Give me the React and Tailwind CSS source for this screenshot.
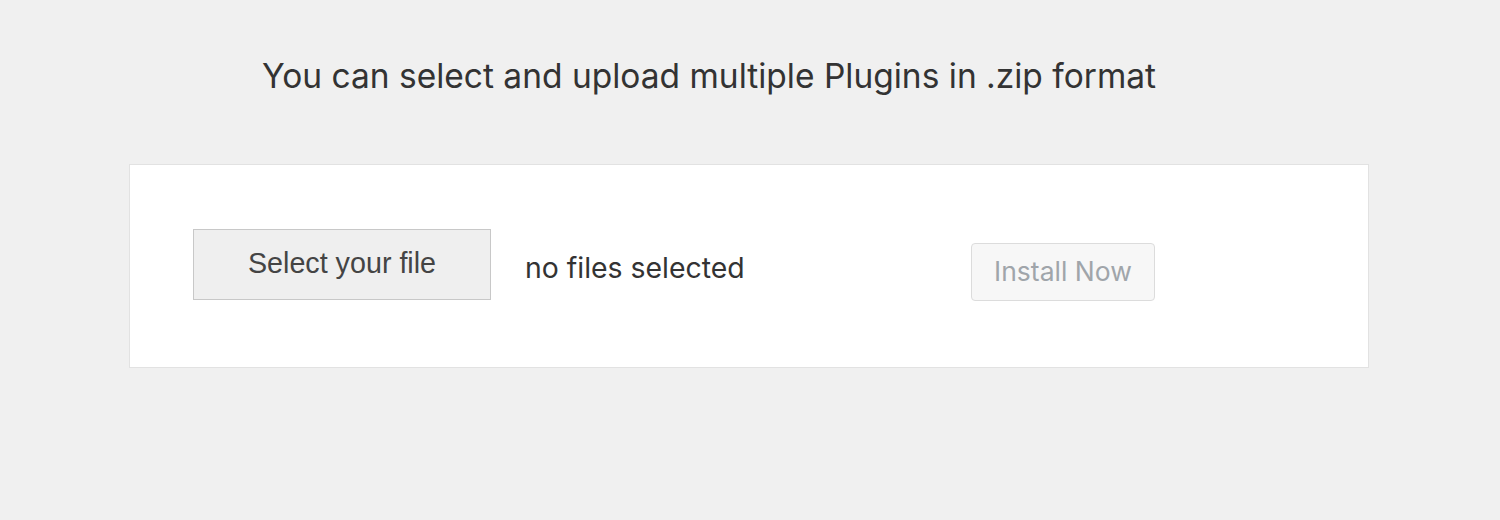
export default function App() {
  return (
    <div className="min-h-[520px] w-full bg-[#f0f0f0] font-['Inter',sans-serif] pt-[56px]">
      <p className="ml-[262px] text-[33.5px] leading-[40px] text-[#333]">
        You can select and upload multiple Plugins in .zip format
      </p>
      <div className="mt-[68px] ml-[129px] w-[1240px] h-[204px] bg-white border border-[#e2e2e2] flex items-center pl-[63px]">
        <button className="-mt-[4px] w-[298px] h-[71px] bg-[#efefef] border border-[#c8c8c8] font-['Liberation_Sans',Arial,sans-serif] text-[28.7px] text-[#444]">
          Select your file
        </button>
        <span className="ml-[34px] mt-[4px] w-[446px] text-[28.4px] text-[#333]">no files selected</span>
        <button className="mt-[12px] w-[184px] h-[58px] bg-[#f7f7f7] border border-[#dcdcdc] rounded-[4px] text-[26.5px] text-[#a0a5aa]">
          Install Now
        </button>
      </div>
    </div>
  );
}
